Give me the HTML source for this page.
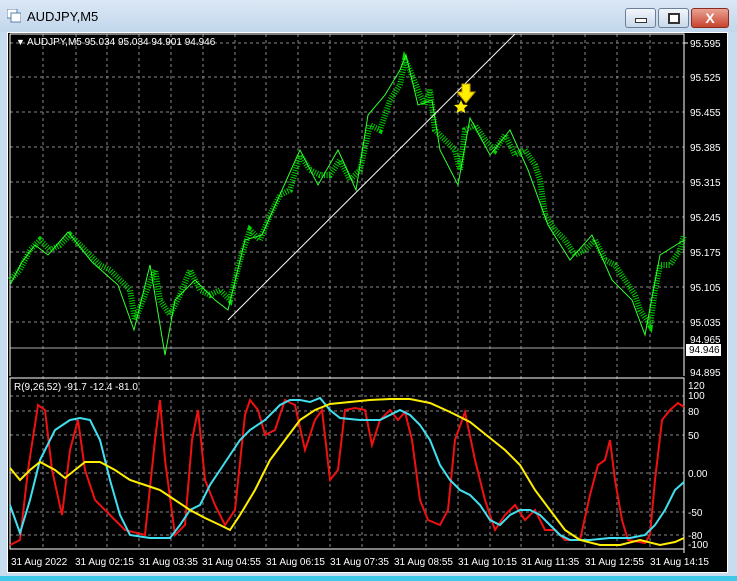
<!DOCTYPE html>
<html><head><style>
body{margin:0;width:737px;height:581px;overflow:hidden;background:#c7dcef;font-family:"Liberation Sans",sans-serif}
.title{position:absolute;left:0;top:0;width:737px;height:32px;background:linear-gradient(#dbe8f5,#c2d7ec)}
.btn{position:absolute;top:8px;height:18px;border:1px solid #6b7f99;border-radius:3px;background:linear-gradient(#f2f6fb,#c9d8ea)}
</style></head><body>
<div class="title"></div>
<svg style="position:absolute;left:7px;top:9px" width="14" height="14"><rect x="0" y="0" width="10" height="9" fill="#fff" stroke="#5a7fa8"/><rect x="4" y="4" width="10" height="9" fill="#fff" stroke="#5a7fa8"/></svg>
<div style="position:absolute;left:27px;top:9px;font-size:13px;color:#000">AUDJPY,M5</div>
<div class="btn" style="left:625px;width:29px"><div style="position:absolute;left:9px;top:9px;width:10px;height:3px;border:1px solid #333;background:#fff"></div></div>
<div class="btn" style="left:658px;width:29px"><div style="position:absolute;left:9px;top:4px;width:8px;height:7px;border:2px solid #333;background:#fff"></div></div>
<div class="btn" style="left:691px;width:36px;border-color:#8a2a20;background:linear-gradient(#e9a293,#c7442f);color:#fff;font-weight:bold;font-size:14px;text-align:center;line-height:18px">X</div>
<div style="position:absolute;left:7px;top:32px;width:721px;height:541px;background:#000;border:1px solid #fff;box-sizing:border-box"></div>
<div style="position:absolute;left:0;top:576px;width:737px;height:5px;background:#40c8e8"></div>
<svg style="position:absolute;left:0;top:0" width="737" height="581" font-family="Liberation Sans" font-size="10">
<g stroke="#888" stroke-dasharray="3,3" stroke-width="1">
<line x1="10" x2="684" y1="43" y2="43"/><line x1="10" x2="684" y1="77" y2="77"/><line x1="10" x2="684" y1="112" y2="112"/><line x1="10" x2="684" y1="147" y2="147"/><line x1="10" x2="684" y1="182" y2="182"/><line x1="10" x2="684" y1="217" y2="217"/><line x1="10" x2="684" y1="252" y2="252"/><line x1="10" x2="684" y1="287" y2="287"/><line x1="10" x2="684" y1="322" y2="322"/>
<line x1="10" x2="684" y1="396" y2="396"/><line x1="10" x2="684" y1="411" y2="411"/><line x1="10" x2="684" y1="435" y2="435"/><line x1="10" x2="684" y1="473" y2="473"/><line x1="10" x2="684" y1="512" y2="512"/><line x1="10" x2="684" y1="535" y2="535"/>
<path d="M43 34V549M76 34V549M107 34V549M139 34V549M171 34V549M203 34V549M235 34V549M266 34V549M298 34V549M330 34V549M362 34V549M394 34V549M426 34V549M458 34V549M490 34V549M521 34V549M553 34V549M585 34V549M617 34V549M650 34V549" />
</g>
<line x1="10" x2="684" y1="348" y2="348" stroke="#aaa"/>
<path d="M10 34H684V376M10 376V34" stroke="#fff" fill="none"/>
<path d="M10 378H684V549H10Z" stroke="#fff" fill="none"/>
<g stroke="#fff"><line x1="684" y1="43" x2="688" y2="43"/><line x1="684" y1="549" x2="684" y2="553"/></g>
<polyline fill="none" stroke="#00d000" stroke-width="6" stroke-dasharray="1,1.5" points="10,280 20,270 30,250 40,240 50,250 60,245 70,235 80,245 90,255 100,265 110,270 120,280 130,290 135,320 145,295 155,270 160,300 170,315 180,295 190,270 200,290 210,295 220,290 230,300 240,260 250,230 260,240 270,215 280,195 290,190 300,155 310,170 320,175 330,175 340,160 350,180 360,170 370,125 380,130 390,100 400,85 405,60 410,70 420,95 425,105 430,90 435,130 445,140 455,150 460,170 465,130 475,125 485,140 495,150 505,135 515,155 525,150 535,165 540,180 545,215 555,230 565,240 575,255 585,250 595,240 605,260 615,265 625,280 635,295 640,310 650,325 655,290 660,265 670,265 680,250 684,235"/>
<polyline fill="none" stroke="#30ff30" stroke-width="1" points="10,285 22,262 35,245 48,255 68,232 92,262 118,285 134,330 150,265 165,355 175,300 195,280 215,300 228,310 245,240 262,235 282,190 300,150 318,185 338,150 356,190 368,115 385,95 400,70 406,55 418,105 432,100 440,150 458,185 470,118 490,155 510,130 528,170 548,225 570,260 592,235 612,280 632,300 645,335 660,255 684,240"/>
<line x1="228" y1="320" x2="515" y2="34" stroke="#fff" stroke-width="1"/>
<path d="M462 84h8v8h5l-9 11-9-11h5z" fill="#ffee00" stroke="#c8a000"/>
<path d="M461 100l2 4.5 5 .5-3.7 3.3 1.1 4.9-4.4-2.6-4.4 2.6 1.1-4.9-3.7-3.3 5-.5z" fill="#ffee00"/>
<polyline fill="none" stroke="#ee1111" stroke-width="2" points="10,545 20,540 28,470 38,405 45,410 52,470 62,515 70,450 78,420 85,470 95,500 105,510 115,520 125,530 145,535 155,440 160,400 165,460 175,535 185,525 192,440 198,410 205,480 215,505 225,525 235,510 245,415 250,400 258,410 265,435 275,430 285,400 295,405 305,450 315,420 322,410 330,480 338,470 345,410 355,408 365,410 372,445 380,420 390,410 398,420 405,412 412,440 420,500 428,520 440,525 448,510 455,440 465,412 475,460 485,500 495,530 505,515 515,505 525,520 535,510 545,530 555,530 565,540 580,540 590,495 598,465 605,460 610,440 615,480 622,520 628,540 645,543 650,535 655,480 662,420 670,410 678,403 684,407"/>
<polyline fill="none" stroke="#40e0f0" stroke-width="2" points="10,505 20,533 30,500 40,460 55,430 70,420 80,418 90,420 100,440 110,480 120,515 130,535 150,538 170,538 180,525 190,510 200,505 210,485 220,470 230,455 240,440 250,430 265,420 280,405 290,400 300,400 310,402 320,398 330,410 340,418 360,420 380,420 400,410 410,415 420,425 430,440 440,465 450,480 460,490 470,495 480,505 490,520 500,525 510,515 520,510 530,510 540,515 550,525 560,535 570,540 590,540 610,538 630,538 645,535 655,525 665,510 675,490 684,482"/>
<polyline fill="none" stroke="#ffee00" stroke-width="2" points="10,468 20,480 30,470 40,462 55,470 65,478 75,470 85,462 100,462 115,470 130,480 145,485 160,490 175,500 190,510 205,518 220,525 230,530 240,515 255,490 270,460 285,440 300,420 315,410 330,404 350,402 370,400 390,399 410,399 430,403 450,412 470,422 490,438 505,450 520,465 535,490 550,510 565,530 580,540 600,545 620,545 640,540 660,545 675,542 684,538"/>
<g fill="#fff">
<text x="16" y="45" font-size="9">▼</text>
<text x="27" y="45">AUDJPY,M5  95.034 95.034 94.901 94.946</text>
<text x="14" y="390">R(9,26,52) -91.7 -12.4 -81.0</text>
<text x="690" y="47">95.595</text><text x="690" y="81">95.525</text><text x="690" y="116">95.455</text><text x="690" y="151">95.385</text><text x="690" y="186">95.315</text><text x="690" y="221">95.245</text><text x="690" y="256">95.175</text><text x="690" y="291">95.105</text><text x="690" y="326">95.035</text><text x="690" y="343">94.965</text><text x="690" y="376">94.895</text>
<text x="688" y="389">120</text><text x="688" y="399">100</text><text x="688" y="415">80</text><text x="688" y="439">50</text><text x="688" y="477">0.00</text><text x="688" y="516">-50</text><text x="688" y="539">-80</text><text x="688" y="548">-100</text>
<text x="11" y="565">31 Aug 2022</text><text x="75" y="565">31 Aug 02:15</text><text x="139" y="565">31 Aug 03:35</text><text x="202" y="565">31 Aug 04:55</text><text x="266" y="565">31 Aug 06:15</text><text x="330" y="565">31 Aug 07:35</text><text x="394" y="565">31 Aug 08:55</text><text x="458" y="565">31 Aug 10:15</text><text x="521" y="565">31 Aug 11:35</text><text x="585" y="565">31 Aug 12:55</text><text x="650" y="565">31 Aug 14:15</text>
</g>
<rect x="686" y="344" width="35" height="12" fill="#fff"/>
<text x="689" y="353" fill="#000">94.946</text>
</svg>
</body></html>
